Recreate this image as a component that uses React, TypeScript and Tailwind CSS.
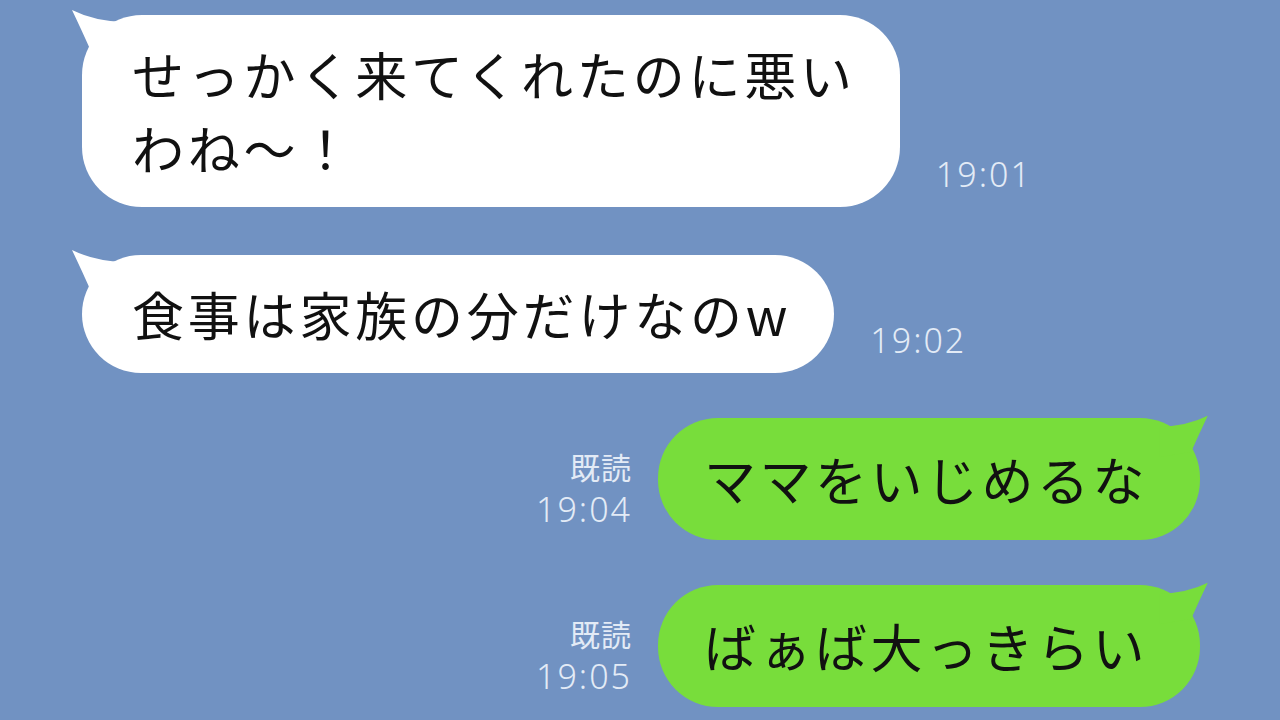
import type { ReactNode } from "react";

const jp = { fontFamily: '"Noto Sans CJK JP", "Noto Sans", sans-serif' };
const thin = { fontFamily: '"Noto Sans", "Noto Sans CJK JP", sans-serif' };

// little horn on top corner of the bubble
const Tail = ({ color, right }: { color: string; right?: boolean }) => (
  <svg
    viewBox="0 0 60 50"
    className={
      right
        ? "absolute right-[-10px] top-[-5px] w-[56px] h-[46px] -scale-x-100"
        : "absolute left-[-12px] top-[-8px] w-[60px] h-[50px]"
    }
  >
    <path d="M2 3 Q 12 24 20 42 L 54 48 L 54 15 Q 24 14 2 3 Z" fill={color} />
  </svg>
);

const Stamp = ({ children }: { children: ReactNode }) => (
  <div className="text-[34px] leading-none tracking-[2px] font-light text-[#e3ebf6]" style={thin}>
    {children}
  </div>
);

const Incoming = ({ lines, time, pr }: { lines: string[]; time: string; pr: string }) => (
  <div className="flex items-end gap-[36px] pl-[82px]">
    <div className={`relative bg-white rounded-[60px] pl-[50px] py-[22px] ${pr}`}>
      <Tail color="#ffffff" />
      <div className="relative text-[52px] leading-[74px] tracking-[3.8px] text-[#111]" style={jp}>
        {lines.map((l) => (
          <div key={l} className="whitespace-nowrap">
            {l}
          </div>
        ))}
      </div>
    </div>
    <div className="mb-[16px]">
      <Stamp>{time}</Stamp>
    </div>
  </div>
);

const Outgoing = ({ text, time }: { text: string; time: string }) => (
  <div className="flex items-end justify-end gap-[26px] pr-[80px]">
    <div className="flex flex-col items-end gap-[11px] mb-[14px]">
      <div className="text-[30px] leading-none tracking-[1px] text-[#e3ebf6]" style={jp}>
        既読
      </div>
      <Stamp>{time}</Stamp>
    </div>
    <div className="relative bg-[#78dd3b] rounded-[60px] pl-[46px] pr-[52px] py-[24px]">
      <Tail color="#78dd3b" right />
      <div className="relative text-[52px] leading-[74px] tracking-[3.5px] text-[#111] whitespace-nowrap" style={jp}>
        {text}
      </div>
    </div>
  </div>
);

export default function App() {
  return (
    <div className="w-[1280px] h-[720px] overflow-hidden bg-[#7192c2] pt-[15px] flex flex-col">
      <Incoming lines={["せっかく来てくれたのに悪い", "わね〜！"]} time="19:01" pr="pr-[44px]" />
      <div className="h-[48px]" />
      <Incoming lines={["食事は家族の分だけなのw"]} time="19:02" pr="pr-[43px]" />
      <div className="h-[45px]" />
      <Outgoing text="ママをいじめるな" time="19:04" />
      <div className="h-[45px]" />
      <Outgoing text="ばぁば大っきらい" time="19:05" />
    </div>
  );
}
